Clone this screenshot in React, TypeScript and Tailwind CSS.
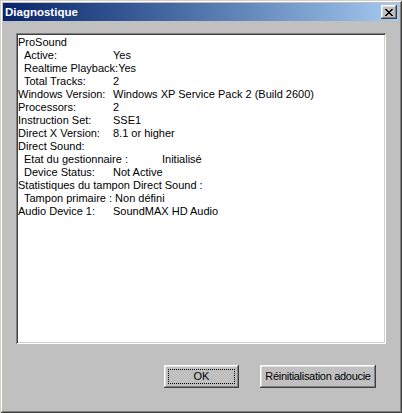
import React from 'react';

type Row = { label: string; value?: string; indent?: boolean; tab?: 1 | 2 };

const rows: Row[] = [
  { label: 'ProSound' },
  { label: 'Active:', value: 'Yes', indent: true },
  { label: 'Realtime Playback:', value: 'Yes', indent: true },
  { label: 'Total Tracks:', value: '2', indent: true },
  { label: 'Windows Version:', value: 'Windows XP Service Pack 2 (Build 2600)' },
  { label: 'Processors:', value: '2' },
  { label: 'Instruction Set:', value: 'SSE1' },
  { label: 'Direct X Version:', value: '8.1 or higher' },
  { label: 'Direct Sound:' },
  { label: 'Etat du gestionnaire :', value: 'Initialisé', indent: true, tab: 2 },
  { label: 'Device Status:', value: 'Not Active', indent: true },
  { label: 'Statistiques du tampon Direct Sound :' },
  { label: 'Tampon primaire : ', value: 'Non défini', indent: true },
  { label: 'Audio Device 1:', value: 'SoundMAX HD Audio' },
];

const raised =
  'shadow-[inset_-1px_-1px_#404040,inset_1px_1px_#ffffff,inset_-2px_-2px_#808080,inset_2px_2px_#dfdfdf]';

function Line({ row }: { row: Row }) {
  const pad = row.indent ? 'pl-[6px]' : '';
  const col = row.tab === 2 ? 'min-w-[144px]' : 'min-w-[95px]';
  return (
    <div className="flex h-[13px] leading-[13px] whitespace-pre">
      <span className={`${col} ${pad}`}>{row.label}</span>
      {row.value && <span>{row.value}</span>}
    </div>
  );
}

export default function App() {
  return (
    <div
      className="w-[402px] h-[413px] bg-[#c0c0c0] p-[3px] flex flex-col text-[11px] text-black shadow-[inset_1px_1px_#d4d0c8,inset_-1px_-1px_#404040,inset_2px_2px_#ffffff,inset_-2px_-2px_#808080]"
      style={{ fontFamily: '"Liberation Sans", Arial, sans-serif' }}
    >
      {/* Title bar */}
      <div className="h-[18px] flex items-center justify-between pl-[2px] pr-[2px] bg-gradient-to-r from-[#0a246a] to-[#a6caf0]">
        <span className="text-white font-bold text-[11.5px] leading-[18px]">Diagnostique</span>
        <button className={`w-[16px] h-[14px] bg-[#c0c0c0] flex items-center justify-center ${raised}`}>
          <svg width="8" height="7" viewBox="0 0 8 7">
            <path d="M0 0h2v1h1v1h2V1h1V0h2v1H7v1H6v1H5v1h1v1h1v1h1v1H6V6H5V5H3v1H2v1H0V6h1V5h1V4h1V3H2V2H1V1H0z" fill="#000" />
          </svg>
        </button>
      </div>

      {/* Info list */}
      <div className="ml-[13px] mt-[12px] w-[370px] h-[311px] bg-white p-[2px] shadow-[inset_1px_1px_#808080,inset_-1px_-1px_#ffffff,inset_2px_2px_#404040,inset_-2px_-2px_#d4d0c8]">
        <div className="pt-[1px]">
          {rows.map((r, i) => (
            <Line key={i} row={r} />
          ))}
        </div>
      </div>

      {/* Buttons */}
      <div className="flex mt-[21px] ml-[161px] gap-[21px]">
        <button className={`relative w-[75px] h-[23px] bg-[#c0c0c0] text-[11px] ${raised}`}>
          <span className="absolute inset-[4px] border border-dotted border-black" />
          OK
        </button>
        <button className={`w-[116px] h-[23px] bg-[#c0c0c0] text-[11px] tracking-[-0.3px] whitespace-nowrap ${raised}`}>
          Réinitialisation adoucie
        </button>
      </div>
    </div>
  );
}
